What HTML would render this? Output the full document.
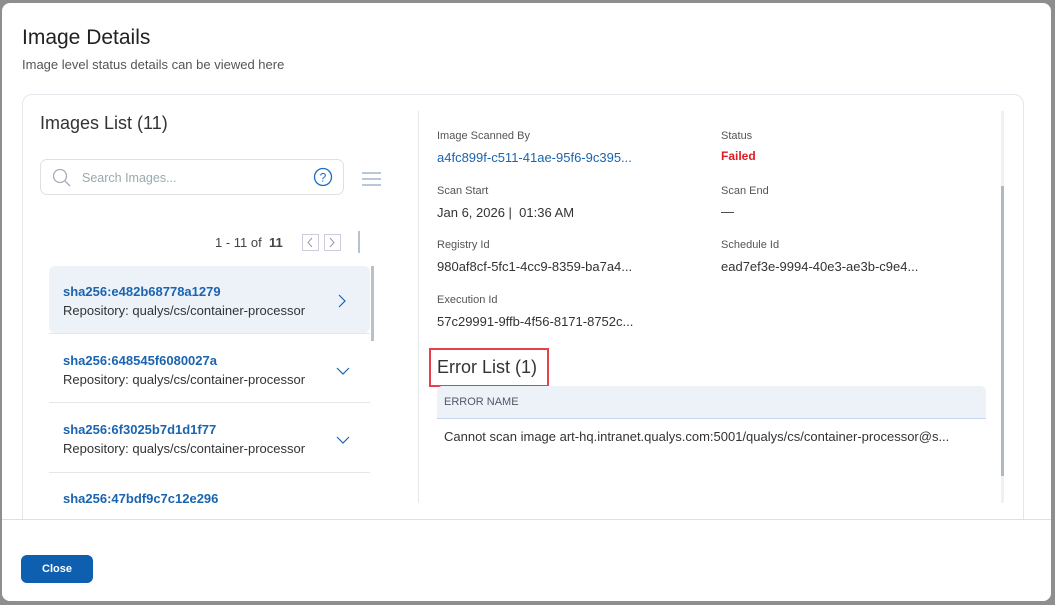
<!DOCTYPE html>
<html><head><meta charset="utf-8"><style>
*{box-sizing:border-box;margin:0;padding:0}
body{width:1055px;height:605px;background:#8e8e8e;font-family:"Liberation Sans",sans-serif;position:relative;overflow:hidden;color:#333}
.modal{position:absolute;left:2px;top:3px;width:1049px;height:598px;background:#fff;border-radius:8px;overflow:hidden}
.abs{position:absolute;white-space:nowrap}
.card{position:absolute;left:20px;top:91px;width:1002px;height:440px;border:1px solid #e3e6ea;border-radius:10px}
.lbl{font-size:11px;color:#555}
.val{font-size:13px;color:#333}
.hash{font-size:13px;font-weight:bold;color:#1a64b0;width:214px;overflow:hidden}
.repo{font-size:13px;color:#333;width:255px;overflow:hidden}
.div{position:absolute;left:47px;width:321px;height:1px;background:#e3e6ea}
</style></head><body>
<div class="modal">
<div class="abs" style="left:20px;top:23px;font-size:21px;color:#222">Image Details</div>
<div class="abs" style="left:20px;top:54px;font-size:13px;color:#555">Image level status details can be viewed here</div>
<div class="card"></div>
<div class="abs" style="left:38px;top:110px;font-size:18px;color:#333">Images List (11)</div>
<div class="abs" style="left:38px;top:156px;width:304px;height:36px;border:1px solid #dde1e6;border-radius:7px"></div>
<svg class="abs" style="left:50px;top:165px" width="20" height="20"><circle cx="8" cy="8" r="6.5" fill="none" stroke="#aab" stroke-width="1.3"/><line x1="13" y1="13" x2="18" y2="18" stroke="#aab" stroke-width="1.3"/></svg>
<div class="abs" style="left:80px;top:168px;font-size:12.5px;color:#9aa">Search Images...</div>
<svg class="abs" style="left:311px;top:164px" width="20" height="20"><circle cx="10" cy="10" r="8.5" fill="none" stroke="#1a6fc0" stroke-width="1.3"/><text x="10" y="14.5" font-size="12" text-anchor="middle" fill="#1a6fc0" font-family="Liberation Sans">?</text></svg>
<svg class="abs" style="left:360px;top:168px" width="20" height="16"><g stroke="#8fa8bf" stroke-width="1.3"><line x1="0" y1="2" x2="19" y2="2"/><line x1="0" y1="8" x2="19" y2="8"/><line x1="0" y1="14" x2="19" y2="14"/></g></svg>
<div class="abs" style="left:213px;top:232px;font-size:13px;color:#444">1 - 11 of &nbsp;<b>11</b></div>
<svg class="abs" style="left:300px;top:231px" width="42" height="18"><rect x="0.5" y="0.5" width="16" height="16" fill="none" stroke="#ccd"/><rect x="22.5" y="0.5" width="16" height="16" fill="none" stroke="#ccd"/><path d="M10 4L6 8.5L10 13" fill="none" stroke="#99a"/><path d="M28 4L32 8.5L28 13" fill="none" stroke="#99a"/></svg>
<div class="abs" style="left:356px;top:228px;width:2px;height:22px;background:#b8c2cc"></div>
<div class="abs" style="left:47px;top:263px;width:321px;height:67px;background:#edf2f9;border-radius:6px"></div>
<div class="abs" style="left:369px;top:263px;width:3px;height:75px;background:#b8c0c8"></div>
<div class="abs hash" style="left:61px;top:281px">sha256:e482b68778a1279</div>
<div class="abs repo" style="left:61px;top:300px">Repository: qualys/cs/container-processor</div>
<svg class="abs" style="left:334px;top:290px" width="12" height="16"><path d="M3 2L9 8L3 14" fill="none" stroke="#1a64b0" stroke-width="1.2"/></svg>
<div class="div" style="top:330px"></div>
<div class="abs hash" style="left:61px;top:350px">sha256:648545f6080027a</div>
<div class="abs repo" style="left:61px;top:369px">Repository: qualys/cs/container-processor</div>
<svg class="abs" style="left:333px;top:362px" width="16" height="12"><path d="M2 3L8 9L14 3" fill="none" stroke="#1a64b0" stroke-width="1.2"/></svg>
<div class="div" style="top:399px"></div>
<div class="abs hash" style="left:61px;top:419px">sha256:6f3025b7d1d1f77</div>
<div class="abs repo" style="left:61px;top:438px">Repository: qualys/cs/container-processor</div>
<svg class="abs" style="left:333px;top:431px" width="16" height="12"><path d="M2 3L8 9L14 3" fill="none" stroke="#1a64b0" stroke-width="1.2"/></svg>
<div class="div" style="top:469px"></div>
<div class="abs" style="left:61px;top:488px;height:16px;overflow:hidden"><div class="hash">sha256:47bdf9c7c12e296</div></div>
<div class="abs" style="left:416px;top:108px;width:1px;height:392px;background:#e3e6ea"></div>
<div class="abs" style="left:999px;top:108px;width:3px;height:392px;background:#eef1f4"></div>
<div class="abs" style="left:999px;top:183px;width:3px;height:290px;background:#b0b8c0"></div>
<div class="abs lbl" style="left:435px;top:127px">Image Scanned By</div>
<div class="abs val" style="left:435px;top:147px;color:#1a64b0">a4fc899f-c511-41ae-95f6-9c395...</div>
<div class="abs lbl" style="left:719px;top:127px">Status</div>
<div class="abs" style="left:719px;top:146px;font-size:12px;font-weight:bold;color:#e01b24">Failed</div>
<div class="abs lbl" style="left:435px;top:182px">Scan Start</div>
<div class="abs val" style="left:435px;top:202px">Jan 6, 2026 |&nbsp; 01:36 AM</div>
<div class="abs lbl" style="left:719px;top:182px">Scan End</div>
<div class="abs val" style="left:719px;top:201px">—</div>
<div class="abs lbl" style="left:435px;top:236px">Registry Id</div>
<div class="abs val" style="left:435px;top:256px">980af8cf-5fc1-4cc9-8359-ba7a4...</div>
<div class="abs lbl" style="left:719px;top:236px">Schedule Id</div>
<div class="abs val" style="left:719px;top:256px">ead7ef3e-9994-40e3-ae3b-c9e4...</div>
<div class="abs lbl" style="left:435px;top:291px">Execution Id</div>
<div class="abs val" style="left:435px;top:311px">57c29991-9ffb-4f56-8171-8752c...</div>
<div class="abs" style="left:427px;top:345px;width:120px;height:39px;border:2px solid #e8404a"></div>
<div class="abs" style="left:435px;top:354px;font-size:18px;color:#333">Error List (1)</div>
<div class="abs" style="left:435px;top:383px;width:549px;height:33px;background:#edf2f9;border-bottom:1px solid #c3d8ee;border-radius:5px 5px 0 0"></div>
<div class="abs" style="left:442px;top:393px;font-size:11px;color:#556">ERROR NAME</div>
<div class="abs val" style="left:442px;top:426px">Cannot scan image art-hq.intranet.qualys.com:5001/qualys/cs/container-processor@s...</div>
<div class="abs" style="left:0;top:516px;width:1049px;height:82px;background:#fff;border-top:1px solid #dcdfe3"></div>
<div class="abs" style="left:19px;top:552px;width:72px;height:28px;background:#0e5fb0;border-radius:6px;color:#fff;font-size:11px;font-weight:bold;text-align:center;line-height:28px">Close</div>
</div>
</body></html>
